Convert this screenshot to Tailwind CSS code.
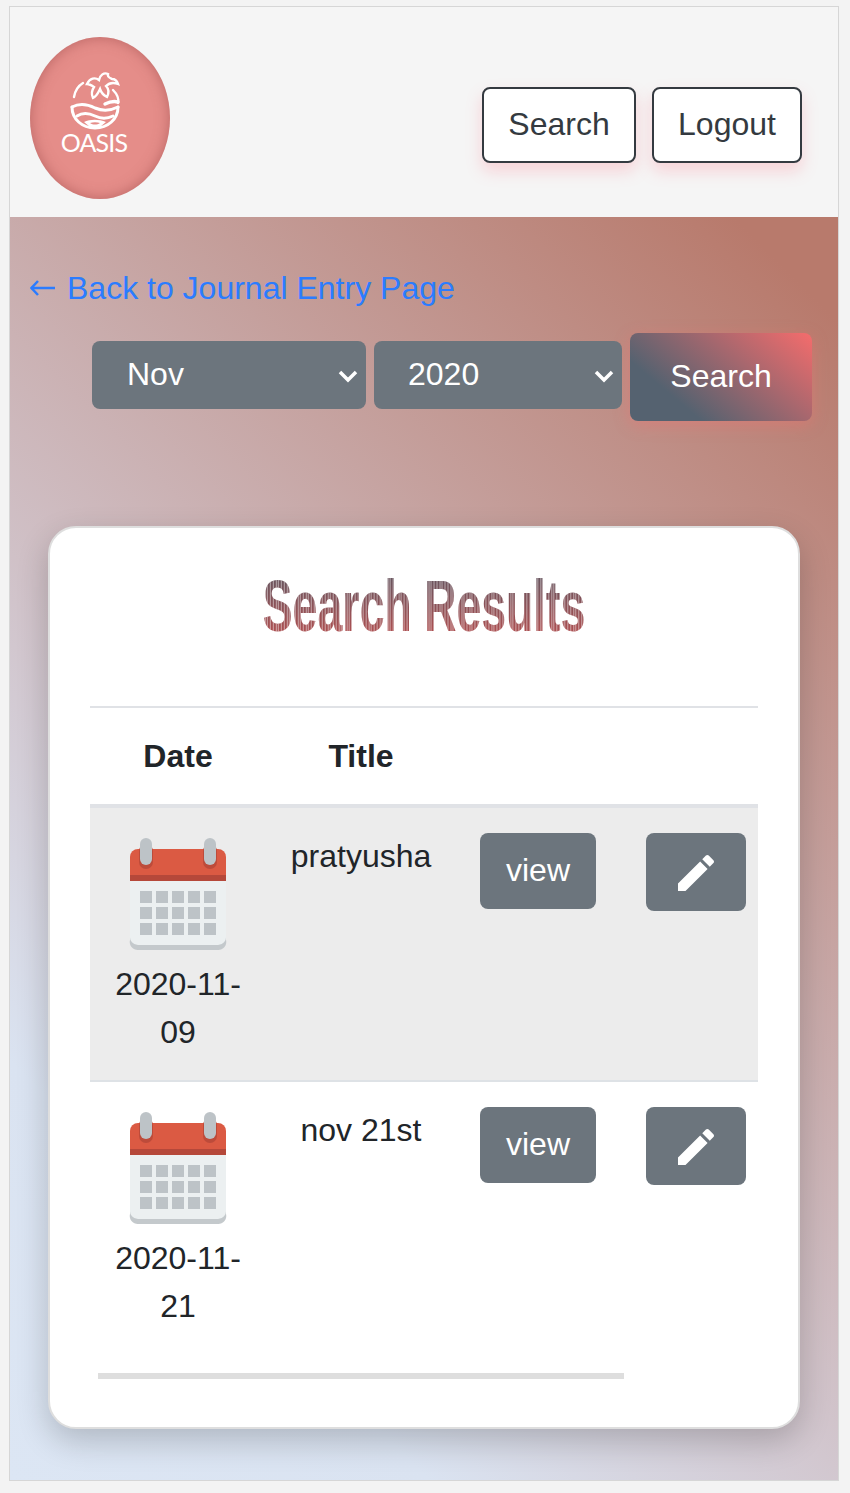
<!DOCTYPE html>
<html lang="en">
<head>
    <meta charset="UTF-8">
    <meta name="viewport" content="width=device-width, initial-scale=1.0">
    <title>Search Results</title>
    <script src="https://cdn.jsdelivr.net/npm/@tailwindcss/browser@4"></script>
</head>
<body class="bg-[#f3f3f3] font-['Liberation_Sans',Arial,sans-serif] text-[32px] leading-[48px] text-[#212529]">
    <div class="ml-[9px] mt-[6px] w-[830px] h-[1475px] border border-[#d6d6d6] flex flex-col">
        <!-- header -->
        <header class="h-[210px] shrink-0 bg-[#f5f5f5] flex justify-between pl-[20px] pr-[36px] pt-[30px]">
            <div class="relative w-[140px] h-[162px] rounded-[50%] bg-[#e58d89] shadow-[inset_0_0_14px_rgba(150,70,70,0.55)] text-white">
                <svg class="absolute left-[36px] top-[30px]" width="62" height="64" viewBox="0 0 62 64" fill="none" stroke="white" stroke-width="2.4" stroke-linecap="round">
                    <path d="M8 30 C9 24 12 19 17 16"/>
                    <path d="M47 23 C51 27 53 32 52 36"/>
                    <path d="M21 17 C24 11 29 10 33 13 C34 8 38 5 42 7 C41 10 44 11 46 12 C49 12 51 14 52 17 C47 15 43 16 40 19 C43 22 43 26 41 30 C37 28 35 25 34 22 C32 26 31 29 27 31 C25 27 26 23 28 20 C25 18 23 17 21 17 Z"/>
                    <path d="M39 37 C43 35 48 34 52 35" stroke-width="3.4"/>
                    <path d="M6 40 C6 52 16 61 29 61 C42 61 52 52 52 40" stroke-width="3"/>
                    <path d="M6 40 C14 36 21 37 29 41 C36 44 44 44 52 40" stroke-width="3"/>
                    <path d="M11 49 C17 45 23 46 29 49 C35 52 41 52 47 49" stroke-width="3"/>
                    <path d="M18 55 C24 52 33 52 40 55 L34 60 L24 60 Z" fill="white" stroke="none"/>
                    <path d="M24 56 C27 55 31 55 34 56 C31 58 27 58 24 56 Z" fill="#e58d89" stroke="none"/>
                </svg>
                <span class="absolute left-0 right-0 top-[90px] pr-[12px] text-center font-['Lato',sans-serif] font-normal text-[25px] leading-[30px] tracking-[-0.8px]">OASIS</span>
            </div>
            <nav class="flex gap-[16px] pt-[50px]">
                <button class="h-[76px] w-[154px] pb-[2px] bg-white border-2 border-[#343a40] rounded-[8px] text-[#343a40] shadow-[0_8px_16px_rgba(255,107,129,0.25)]">Search</button>
                <button class="h-[76px] w-[150px] pb-[2px] bg-white border-2 border-[#343a40] rounded-[8px] text-[#343a40] shadow-[0_8px_16px_rgba(255,107,129,0.25)]">Logout</button>
            </nav>
        </header>

        <!-- main -->
        <main class="flex-1 bg-[linear-gradient(45deg,#dce6f4_0%,#dae3f1_20%,#d2c7cf_40%,#b87a6c_95%)] pt-[47px]">
            <a href="#" class="flex items-center gap-[11px] pl-[20px] text-[#2b7cff]">
                <svg width="26" height="18" viewBox="0 0 26 18" fill="none" stroke="#2b7cff"><path d="M1 9 H25" stroke-width="2.5"/><path d="M8 2 L1.5 9 L8 16" stroke-width="2.5"/></svg>
                <span>Back to Journal Entry Page</span>
            </a>

            <form class="flex items-start gap-[8px] ml-[82px] mt-[21px]">
                <div class="relative mt-[8px]">
                    <select class="appearance-none w-[274px] h-[68px] pl-[35px] pb-[2px] bg-[#6c757d] text-white rounded-[8px]">
                        <option>Nov</option>
                    </select>
                    <svg class="absolute right-[8px] top-[28px]" width="20" height="14" viewBox="0 0 20 14" fill="none" stroke="white" stroke-width="3.5"><path d="M2 3 L10 11 L18 3"/></svg>
                </div>
                <div class="relative mt-[8px]">
                    <select class="appearance-none w-[248px] h-[68px] pl-[34px] pb-[2px] bg-[#6c757d] text-white rounded-[8px]">
                        <option>2020</option>
                    </select>
                    <svg class="absolute right-[8px] top-[28px]" width="20" height="14" viewBox="0 0 20 14" fill="none" stroke="white" stroke-width="3.5"><path d="M2 3 L10 11 L18 3"/></svg>
                </div>
                <button type="button" class="w-[182px] h-[88px] pb-[2px] rounded-[8px] text-white bg-[linear-gradient(40deg,#556270_25%,#f56c6c_100%)] shadow-[0_4px_16px_rgba(255,107,107,0.35)]">Search</button>
            </form>

            <!-- results card -->
            <section class="mt-[105px] ml-[38px] w-[752px] h-[903px] bg-white border-2 border-[#dedede] rounded-[28px] shadow-[0_12px_32px_rgba(0,0,0,0.2)] px-[40px] pt-[40px]">
                <div class="h-[138px] text-center">
                    <h1 class="inline-block scale-x-[0.62] text-[72px] leading-[76px] font-bold whitespace-nowrap bg-clip-text text-transparent bg-[repeating-linear-gradient(90deg,#ffffff00_0px,#ffffff00_2.8px,#ffffff80_2.8px,#ffffff80_4.4px),linear-gradient(#5c5560,#bb4f4f)]">Search Results</h1>
                </div>
                <div class="w-[668px] overflow-hidden">
                    <table class="table-fixed w-[668px] text-center">
                        <thead>
                            <tr class="border-t-2 border-b-4 border-[#e0e2e6]">
                                <th class="w-[176px] p-[24px] font-bold">Date</th>
                                <th class="w-[190px] p-[24px] font-bold">Title</th>
                                <th class="w-[164px] p-[24px]"></th>
                                <th class="w-[138px] p-[24px]"></th>
                            </tr>
                        </thead>
                        <tbody>
                            <tr class="bg-[#ececec] border-b-2 border-[#dee2e6]">
                                <td class="p-[24px] align-top">
                                    <svg class="blur-[0.7px]" width="128" height="128" viewBox="0 0 128 128">
                                        <path d="M16 30 a8 8 0 0 1 8-8 H104 a8 8 0 0 1 8 8 V108 a8 8 0 0 1-8 10 H24 a8 8 0 0 1-8-10 Z" fill="#c4c9cc"/>
                                        <path d="M16 49 H112 V104 a8 8 0 0 1-8 9 H24 a8 8 0 0 1-8-9 Z" fill="#ecf0f1"/>
                                        <path d="M16 49 V25 a8 8 0 0 1 8-8 H104 a8 8 0 0 1 8 8 V49 Z" fill="#db5a43"/>
                                        <rect x="16" y="43" width="96" height="6" fill="#b5483a"/>
                                        <rect x="25" y="12" width="14" height="25" rx="7" fill="#bd4b3a"/>
                                        <rect x="89" y="12" width="14" height="25" rx="7" fill="#bd4b3a"/>
                                        <rect x="26" y="6" width="12" height="27" rx="6" fill="#bdc3c7"/>
                                        <rect x="90" y="6" width="12" height="27" rx="6" fill="#bdc3c7"/>
                                        <g fill="#bdc3c7">
                                            <rect x="26" y="59" width="12" height="12"/><rect x="42" y="59" width="12" height="12"/><rect x="58" y="59" width="12" height="12"/><rect x="74" y="59" width="12" height="12"/><rect x="90" y="59" width="12" height="12"/>
                                            <rect x="26" y="75" width="12" height="12"/><rect x="42" y="75" width="12" height="12"/><rect x="58" y="75" width="12" height="12"/><rect x="74" y="75" width="12" height="12"/><rect x="90" y="75" width="12" height="12"/>
                                            <rect x="26" y="91" width="12" height="12"/><rect x="42" y="91" width="12" height="12"/><rect x="58" y="91" width="12" height="12"/><rect x="74" y="91" width="12" height="12"/><rect x="90" y="91" width="12" height="12"/>
                                        </g>
                                    </svg>
                                    2020-11-09
                                </td>
                                <td class="p-[24px] align-top">pratyusha</td>
                                <td class="p-[24px] align-top"><button class="mt-px w-[116px] h-[76px] pb-[2px] bg-[#6c757d] text-white rounded-[8px]">view</button></td>
                                <td class="py-[24px] pl-[26px] pr-0 align-top text-left">
                                    <button class="mt-px w-[100px] h-[78px] pt-[2px] bg-[#6c757d] rounded-[8px] flex items-center justify-center">
                                        <svg width="48" height="48" viewBox="0 0 24 24" fill="white"><path d="M3 17.25V21h3.75L17.81 9.94l-3.75-3.75L3 17.25zM20.71 7.04c.39-.39.39-1.02 0-1.41l-2.34-2.34c-.39-.39-1.02-.39-1.41 0l-1.83 1.83 3.75 3.75 1.83-1.83z"/></svg>
                                    </button>
                                </td>
                            </tr>
                            <tr>
                                <td class="p-[24px] align-top">
                                    <svg class="blur-[0.7px]" width="128" height="128" viewBox="0 0 128 128">
                                        <path d="M16 30 a8 8 0 0 1 8-8 H104 a8 8 0 0 1 8 8 V108 a8 8 0 0 1-8 10 H24 a8 8 0 0 1-8-10 Z" fill="#c4c9cc"/>
                                        <path d="M16 49 H112 V104 a8 8 0 0 1-8 9 H24 a8 8 0 0 1-8-9 Z" fill="#ecf0f1"/>
                                        <path d="M16 49 V25 a8 8 0 0 1 8-8 H104 a8 8 0 0 1 8 8 V49 Z" fill="#db5a43"/>
                                        <rect x="16" y="43" width="96" height="6" fill="#b5483a"/>
                                        <rect x="25" y="12" width="14" height="25" rx="7" fill="#bd4b3a"/>
                                        <rect x="89" y="12" width="14" height="25" rx="7" fill="#bd4b3a"/>
                                        <rect x="26" y="6" width="12" height="27" rx="6" fill="#bdc3c7"/>
                                        <rect x="90" y="6" width="12" height="27" rx="6" fill="#bdc3c7"/>
                                        <g fill="#bdc3c7">
                                            <rect x="26" y="59" width="12" height="12"/><rect x="42" y="59" width="12" height="12"/><rect x="58" y="59" width="12" height="12"/><rect x="74" y="59" width="12" height="12"/><rect x="90" y="59" width="12" height="12"/>
                                            <rect x="26" y="75" width="12" height="12"/><rect x="42" y="75" width="12" height="12"/><rect x="58" y="75" width="12" height="12"/><rect x="74" y="75" width="12" height="12"/><rect x="90" y="75" width="12" height="12"/>
                                            <rect x="26" y="91" width="12" height="12"/><rect x="42" y="91" width="12" height="12"/><rect x="58" y="91" width="12" height="12"/><rect x="74" y="91" width="12" height="12"/><rect x="90" y="91" width="12" height="12"/>
                                        </g>
                                    </svg>
                                    2020-11-21
                                </td>
                                <td class="p-[24px] align-top">nov 21st</td>
                                <td class="p-[24px] align-top"><button class="mt-px w-[116px] h-[76px] pb-[2px] bg-[#6c757d] text-white rounded-[8px]">view</button></td>
                                <td class="py-[24px] pl-[26px] pr-0 align-top text-left">
                                    <button class="mt-px w-[100px] h-[78px] pt-[2px] bg-[#6c757d] rounded-[8px] flex items-center justify-center">
                                        <svg width="48" height="48" viewBox="0 0 24 24" fill="white"><path d="M3 17.25V21h3.75L17.81 9.94l-3.75-3.75L3 17.25zM20.71 7.04c.39-.39.39-1.02 0-1.41l-2.34-2.34c-.39-.39-1.02-.39-1.41 0l-1.83 1.83 3.75 3.75 1.83-1.83z"/></svg>
                                    </button>
                                </td>
                            </tr>
                        </tbody>
                    </table>
                    <div class="w-[526px] h-[6px] ml-[8px] mt-[19px] bg-[#dedede]"></div>
                </div>
            </section>
        </main>
    </div>
</body>
</html>
